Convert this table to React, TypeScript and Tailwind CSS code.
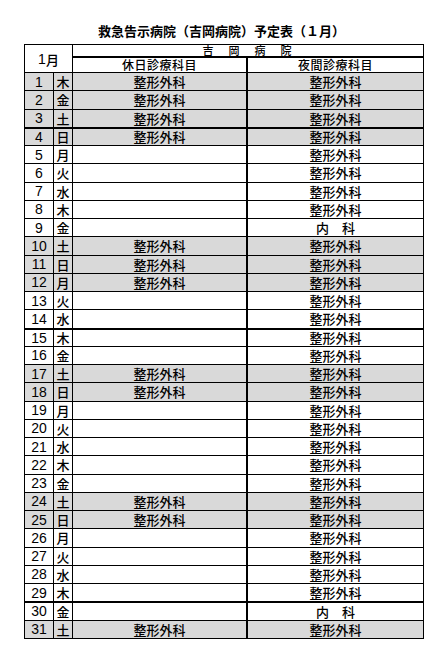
import React from "react";

const WD = ["木", "金", "土", "日", "月", "火", "水"];
const GRAY = new Set([1, 2, 3, 4, 10, 11, 12, 17, 18, 24, 25, 31]);
const THICK = new Set([4, 15, 30]);

const jp = { fontFamily: '"Noto Sans CJK JP", "Noto Sans", sans-serif' };
const num = { fontFamily: '"Liberation Sans Narrow", "Arial Narrow", "Liberation Sans", sans-serif' };

export default function App() {
  const rows = Array.from({ length: 31 }, (_, i) => {
    const d = i + 1;
    return {
      d,
      w: WD[i % 7],
      gray: GRAY.has(d),
      thick: THICK.has(d),
      night: d === 9 || d === 30 ? "内　科" : "整形外科",
    };
  });

  return (
    <div className="w-[448px] h-[652px] bg-white text-black pt-[23px]" style={jp}>
      <div className="ml-[24px] w-[400px] pr-[5px] text-center text-[13px] leading-[16px] font-bold mb-[5px]">
        救急告示病院（吉岡病院）予定表（１月）
      </div>
      <div className="ml-[24px] w-[400px] border border-black font-medium">
        <div className="flex h-[27px]">
          <div className="w-[48px] border-r border-black flex items-center justify-center text-[13px] leading-none pt-[1px]">
            <span style={num} className="text-[14px]">1</span>
            <span>月</span>
          </div>
          <div className="flex-1 flex flex-col">
            <div className="h-[13px] border-b-2 border-black flex items-center justify-center text-[11px] leading-[11px] tracking-[2px]">
              吉　岡　病　院
            </div>
            <div className="flex-1 flex">
              <div className="w-[175px] border-r-2 border-black flex items-center justify-center text-[12px] leading-[12px] tracking-[0.5px]">
                休日診療科目
              </div>
              <div className="flex-1 flex items-center justify-center text-[12px] leading-[12px] tracking-[0.5px]">
                夜間診療科目
              </div>
            </div>
          </div>
        </div>
        {rows.map((r) => (
          <div
            key={r.d}
            className={`flex h-[18.26px] border-black ${r.thick ? "border-t-2" : "border-t"} ${r.gray ? "bg-[#d9d9d9]" : "bg-white"}`}
          >
            <div className="w-[29px] border-r border-black flex items-center justify-center text-[14px] leading-none" style={num}>
              {r.d}
            </div>
            <div className="w-[19px] border-r border-black flex items-center justify-center text-[13px] leading-none">
              {r.w}
            </div>
            <div className="w-[175px] border-r-2 border-black flex items-center justify-center text-[13px] leading-none">
              {r.gray ? "整形外科" : ""}
            </div>
            <div className="flex-1 flex items-center justify-center text-[13px] leading-none">
              {r.night}
            </div>
          </div>
        ))}
      </div>
    </div>
  );
}
